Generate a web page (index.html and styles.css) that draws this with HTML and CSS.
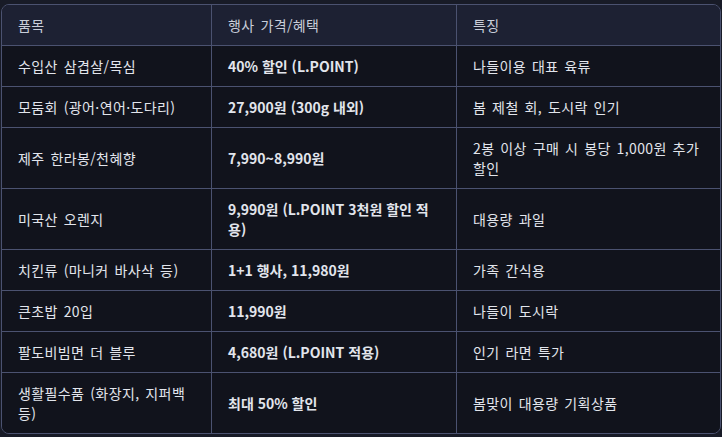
FILE: index.html
```html
<!DOCTYPE html>
<html lang="ko">
<head>
<meta charset="utf-8">
<link rel="stylesheet" href="styles.css">
</head>
<body>
<div class="wrap">
<table class="tbl">
<thead>
<tr><th class="c1">품목</th><th class="c2">행사 가격/혜택</th><th>특징</th></tr>
</thead>
<tbody>
<tr><td>수입산 삼겹살/목심</td><td class="b">40% 할인 (L.POINT)</td><td>나들이용 대표 육류</td></tr>
<tr><td>모둠회 (광어·연어·도다리)</td><td class="b">27,900원 (300g 내외)</td><td>봄 제철 회, 도시락 인기</td></tr>
<tr><td>제주 한라봉/천혜향</td><td class="b">7,990~8,990원</td><td>2봉 이상 구매 시 봉당 1,000원 추가 할인</td></tr>
<tr><td>미국산 오렌지</td><td class="b">9,990원 (L.POINT 3천원 할인 적용)</td><td>대용량 과일</td></tr>
<tr><td>치킨류 (마니커 바사삭 등)</td><td class="b">1+1 행사, 11,980원</td><td>가족 간식용</td></tr>
<tr><td>큰초밥 20입</td><td class="b">11,990원</td><td>나들이 도시락</td></tr>
<tr><td>팔도비빔면 더 블루</td><td class="b">4,680원 (L.POINT 적용)</td><td>인기 라면 특가</td></tr>
<tr><td>생활필수품 (화장지, 지퍼백 등)</td><td class="b">최대 50% 할인</td><td>봄맞이 대용량 기획상품</td></tr>
</tbody>
</table>
</div>
</body>
</html>
```
FILE: styles.css
```css
html, body {
  margin: 0;
  padding: 0;
  background: #181b27;
}
body {
  padding-top: 4px;
  font-family: "Noto Sans CJK KR", "Noto Sans", sans-serif;
  font-size: 14px;
  line-height: 20px;
}
.wrap {
  margin: 0 1px;
  border: 1px solid #4b5270;
  border-radius: 8px;
  overflow: hidden;
}
.tbl {
  width: 100%;
  border-collapse: separate;
  border-spacing: 0;
  table-layout: fixed;
}
.tbl th, .tbl td {
  box-sizing: border-box;
  padding: 10px 16px;
  text-align: left;
  vertical-align: middle;
  border-right: 1px solid #4b5270;
  border-bottom: 1px solid #4b5270;
  letter-spacing: 0.4px;
  word-spacing: 1.5px;
}
.tbl th:last-child, .tbl td:last-child {
  border-right: none;
}
.tbl tbody tr:last-child td {
  border-bottom: none;
}
.tbl th {
  background: #1d2133;
  color: #c8cdd9;
  font-weight: 400;
}
.tbl td {
  background: #11131c;
  color: #e2e5ec;
}
.tbl .c1 { width: 210px; }
.tbl .c2 { width: 245px; }
.tbl td.b {
  font-weight: 700;
  letter-spacing: 0;
  word-spacing: 0;
}
```
